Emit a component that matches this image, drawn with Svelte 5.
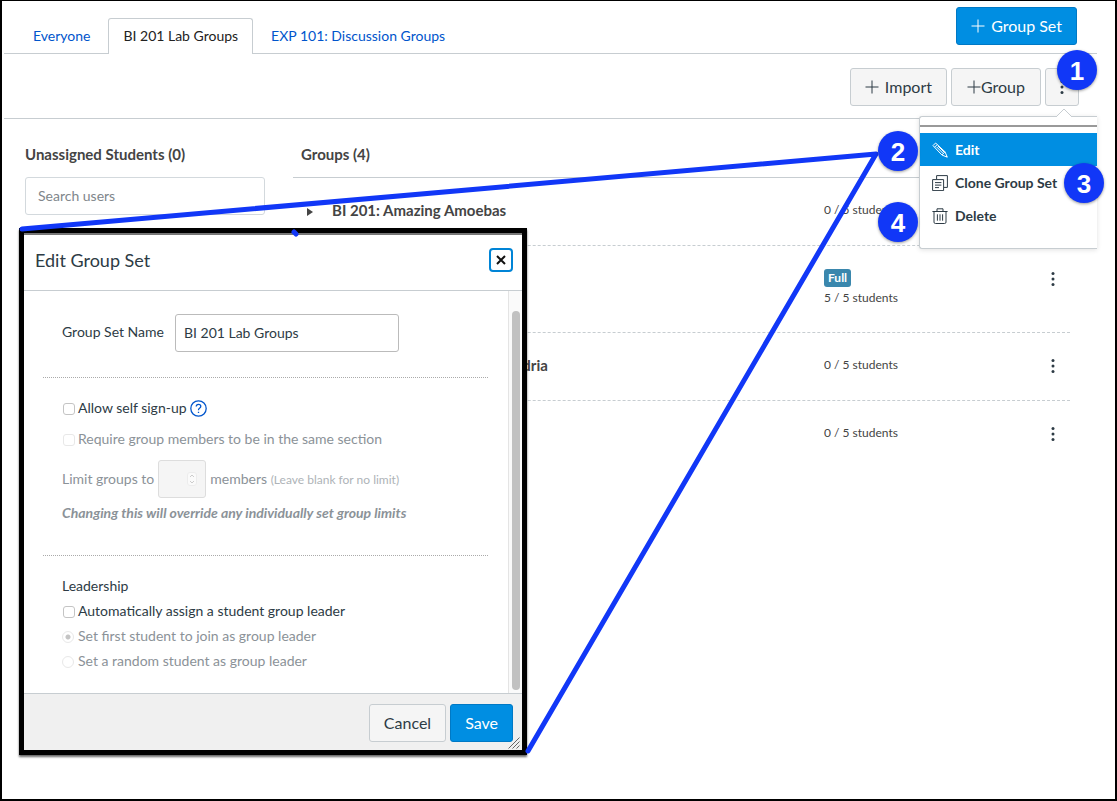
<script lang="ts">
  type Group = { name: string; count: number; max: number };

  const tabs = ['Everyone', 'BI 201 Lab Groups', 'EXP 101: Discussion Groups'];

  const groups: Group[] = [
    { name: 'BI 201: Amazing Amoebas', count: 0, max: 5 },
    { name: '', count: 5, max: 5 },
    { name: 'BI 201: Marvelous Mitochondria', count: 0, max: 5 },
    { name: '', count: 0, max: 5 }
  ];

  let activeTab = $state('BI 201 Lab Groups');
  let search = $state('');
  let setName = $state('BI 201 Lab Groups');
  let selfSignup = $state(false);
  let autoLeader = $state(false);
  let leaderMode = $state('first');

  // the callout lines run from the dialog corners to the Edit menu item
  let pageWidth = $state(1113);
  let tipX = $derived(pageWidth - 239);
</script>

{#snippet plus()}
  <svg class="plus" viewBox="0 0 14 14" aria-hidden="true"><path d="M7 .5v13M.5 7h13" /></svg>
{/snippet}

{#snippet dots()}
  <svg class="dots" viewBox="0 0 4 16" aria-hidden="true">
    <circle cx="2" cy="2.5" r="1.5" /><circle cx="2" cy="8" r="1.5" /><circle cx="2" cy="13.5" r="1.5" />
  </svg>
{/snippet}

<div class="page" bind:clientWidth={pageWidth}>
  <header class="tabs-bar">
    <nav class="tabs">
      {#each tabs as tab}
        <a href="#groups" class="tab" class:active={tab === activeTab} onclick={() => (activeTab = tab)}>{tab}</a>
      {/each}
    </nav>
    <button type="button" class="btn primary">{@render plus()} Group Set</button>
  </header>

  <div class="toolbar">
    <button type="button" class="btn">{@render plus()} Import</button>
    <button type="button" class="btn tight">{@render plus()}Group</button>
    <button type="button" class="btn more" aria-label="Group set options">{@render dots()}</button>
  </div>

  <main class="columns">
    <section class="unassigned">
      <h2>Unassigned Students (0)</h2>
      <input class="search" type="text" placeholder="Search users" aria-label="Search users" bind:value={search} />
    </section>

    <section class="groups">
      <h2>Groups (4)</h2>
      <ul>
        {#each groups as group}
          <li>
            <svg class="arrow" viewBox="0 0 6 8" aria-hidden="true"><path d="M0 0l6 4-6 4z" /></svg>
            <strong>{group.name}</strong>
            <div class="count">
              {#if group.count === group.max}<span class="full">Full</span>{/if}
              <span>{group.count} / {group.max} students</span>
            </div>
            <button type="button" class="row-more" aria-label="Group options">{@render dots()}</button>
          </li>
        {/each}
      </ul>
    </section>
  </main>

  <div class="menu" role="menu">
    <svg class="pointer" viewBox="0 0 18 10" aria-hidden="true"><path d="M1 9L9 1l8 8" /></svg>
    <button type="button" role="menuitem" class="current">
      <svg viewBox="0 0 16 16" aria-hidden="true">
        <path d="M1 3.6L3.6 1 13 9.8l2.3 5.4-5.4-2.2zM2.6 5.2l2.6-2.6M9.9 13L13 9.8M4.6 4.9l6.6 6.6M5.9 3.9l6.3 6.3M14 15l1-1" />
      </svg>
      Edit
    </button>
    <button type="button" role="menuitem">
      <svg viewBox="0 0 16 16" aria-hidden="true">
        <path d="M.6 4.6h11v11H.6zM4.6 4.2V.6h10.8v11.8h-3.4M3 7.6h6.4M3 10.1h6.4M3 12.6h4" />
      </svg>
      Clone Group Set
    </button>
    <button type="button" role="menuitem">
      <svg viewBox="0 0 16 16" aria-hidden="true">
        <path d="M.4 3.5h15.2M5 3.3V.8h6v2.5M2 3.5v10.6q0 1.4 1.4 1.4h9.2q1.4 0 1.4-1.4V3.5M5.4 6.3v6.4M8 6.3v6.4M10.6 6.3v6.4" />
      </svg>
      Delete
    </button>
  </div>

  <div class="dialog" role="dialog" aria-labelledby="dialog-title">
    <div class="dialog-head">
      <h1 id="dialog-title">Edit Group Set</h1>
      <button type="button" class="close" aria-label="Close">
        <svg viewBox="0 0 10 10" aria-hidden="true"><path d="M1 1l8 8M9 1L1 9" /></svg>
      </button>
    </div>

    <div class="dialog-body">
      <form id="group-set-form">
        <div class="fields name-row">
          <label for="set-name">Group Set Name</label>
          <input id="set-name" type="text" bind:value={setName} />
        </div>

        <div class="fields signup">
          <div class="check-row">
            <label><input type="checkbox" bind:checked={selfSignup} />Allow self sign-up</label>
            <button type="button" class="help" aria-label="Help">
              <svg viewBox="0 0 17 17" aria-hidden="true">
                <circle cx="8.5" cy="8.5" r="7.7" />
                <path d="M6.2 6.6q0-2.3 2.3-2.3t2.3 2q0 1.2-1.3 1.9-1 .6-1 1.8v.3M8.5 11.8v1.3" />
              </svg>
            </button>
          </div>
          <label class="muted section-check"><input type="checkbox" disabled />Require group members to be in the same section</label>
          <div class="limit muted">
            <label for="limit">Limit groups to</label>
            <span class="number">
              <input id="limit" type="number" disabled />
              <svg viewBox="0 0 10 14" aria-hidden="true">
                <rect x=".5" y=".5" width="9" height="13" rx="2.5" />
                <path d="M3 5l2-2 2 2M3 9l2 2 2-2" />
              </svg>
            </span>
            <span>members <small>(Leave blank for no limit)</small></span>
          </div>
          <em class="muted">Changing this will override any individually set group limits</em>
        </div>

        <div class="fields leadership" role="group" aria-labelledby="leadership">
          <span id="leadership" class="line">Leadership</span>
          <label class="line"><input type="checkbox" bind:checked={autoLeader} />Automatically assign a student group leader</label>
          <label class="line muted">
            <input type="radio" value="first" disabled={!autoLeader} bind:group={leaderMode} />Set first student to join as group leader
          </label>
          <label class="line muted">
            <input type="radio" value="random" disabled={!autoLeader} bind:group={leaderMode} />Set a random student as group leader
          </label>
        </div>
      </form>
      <div class="track"><div class="thumb"></div></div>
    </div>

    <div class="dialog-foot">
      <button type="button" class="btn">Cancel</button>
      <button type="submit" form="group-set-form" class="btn primary">Save</button>
      <svg class="grip" viewBox="0 0 12 12" aria-hidden="true"><path d="M.5 11.5l11-11M4.5 11.5l7-7M8.5 11.5l3-3" /></svg>
    </div>
  </div>

  <svg class="lines" aria-hidden="true">
    <path d="M20 228L{tipX} 153L526 750M292 231l2 2" />
  </svg>
  <span class="step one">1</span>
  <span class="step two">2</span>
  <span class="step three">3</span>
  <span class="step four">4</span>
</div>

<style>
  :global(body) {
    margin: 0;
    background: #fff;
  }

  .page {
    position: relative;
    box-sizing: border-box;
    min-height: 100vh;
    padding: 0 18px 0 2px;
    border: 2px solid #000;
    border-top-width: 1px;
    overflow: hidden;
    font-family: Lato, 'Liberation Sans', sans-serif;
    font-size: 14px;
    line-height: 20px;
    color: #2d3b45;
  }

  button,
  input {
    font: inherit;
    color: inherit;
  }

  button {
    cursor: pointer;
  }

  svg {
    display: block;
    flex: none;
    fill: none;
    stroke: currentColor;
  }

  h1,
  h2,
  ul {
    margin: 0;
    padding: 0;
    list-style: none;
  }

  .tabs-bar {
    display: flex;
    justify-content: space-between;
    align-items: flex-start;
    height: 52px;
    padding-right: 20px;
    border-bottom: 1px solid #c7cdd1;
  }

  .tabs {
    display: flex;
    padding: 17px 0 0 14px;
  }

  .tab {
    height: 34px;
    padding: 0 14px;
    border: 1px solid transparent;
    border-bottom: 0;
    border-radius: 3px 3px 0 0;
    line-height: 34px;
    color: #0055cc;
    text-decoration: none;
  }

  .tab.active {
    height: 35px;
    margin: 0 3px;
    border-color: #c7cdd1;
    background: #fff;
    color: #222;
  }

  .btn {
    display: inline-flex;
    align-items: center;
    justify-content: center;
    gap: 6px;
    box-sizing: border-box;
    height: 38px;
    padding: 0 14px 1px;
    border: 1px solid #c7cdd1;
    border-radius: 3px;
    background: #f5f5f5;
    font-size: 16px;
    white-space: nowrap;
  }

  .btn.primary {
    border-color: #0079c5;
    background: #008ee2;
    color: #fff;
  }

  .tabs-bar .btn {
    margin-top: 6px;
  }

  .btn.tight {
    gap: 0;
    padding: 0 15px 1px;
  }

  .btn.more {
    width: 34px;
    padding: 0;
  }

  .plus {
    width: 14px;
    height: 14px;
  }

  .dots {
    width: 4px;
    height: 16px;
    fill: #2d3b45;
    stroke: none;
  }

  .toolbar {
    display: flex;
    justify-content: flex-end;
    gap: 4px;
    padding: 14px 18px 12px;
    border-bottom: 1px solid #c7cdd1;
  }

  .columns {
    display: grid;
    grid-template-columns: 240px 1fr;
    gap: 28px;
    padding: 24px 27px 0 21px;
  }

  h2 {
    padding-bottom: 12px;
    font-size: 15px;
    line-height: 22px;
    font-weight: 700;
    color: #444;
  }

  .search {
    box-sizing: border-box;
    width: 100%;
    height: 38px;
    padding: 0 12px 2px;
    border: 1px solid #d3d9dd;
    border-radius: 3px;
  }

  .search::placeholder {
    color: #80868b;
    opacity: 1;
  }

  .groups h2 {
    padding-left: 8px;
  }

  .groups ul {
    border-top: 1px solid #c7cdd1;
  }

  .groups li {
    display: grid;
    grid-template-columns: 25px 1fr 212px 34px;
    align-items: start;
    padding: 21px 0 23px 14px;
    border-bottom: 1px dashed #c7cdd1;
    color: #444;
  }

  .groups li:last-child {
    border-bottom: 0;
  }

  .arrow {
    width: 6px;
    height: 8px;
    margin-top: 9px;
    fill: #444;
    stroke: none;
  }

  .groups strong {
    font-size: 15px;
    line-height: 22px;
  }

  .count {
    display: grid;
    justify-items: start;
    font-size: 12px;
    line-height: 22px;
  }

  .full {
    margin-top: 2px;
    padding: 0 4px;
    border-radius: 3px;
    background: #3a87ad;
    line-height: 18px;
    font-weight: 700;
    color: #fff;
  }

  .row-more {
    display: grid;
    place-items: center;
    height: 23px;
    padding: 0;
    border: 0;
    background: none;
  }

  .menu {
    position: absolute;
    top: 115px;
    right: 18px;
    box-sizing: border-box;
    width: 178px;
    padding: 16px 0;
    border: 1px solid #c7cdd1;
    border-right: 0;
    border-radius: 3px 0 0 3px;
    background: #fff;
    box-shadow: 0 1px 5px rgba(0, 0, 0, 0.12);
  }

  .menu::before {
    content: '';
    position: absolute;
    top: 8px;
    left: 0;
    right: 0;
    border-top: 2px solid #999;
  }

  .pointer {
    position: absolute;
    top: -9px;
    right: 24px;
    width: 18px;
    height: 10px;
    fill: #fff;
    stroke: #c7cdd1;
  }

  .menu button {
    display: flex;
    align-items: center;
    gap: 7px;
    width: 100%;
    height: 33px;
    padding: 0 12px;
    border: 0;
    background: none;
    font-weight: 700;
    white-space: nowrap;
  }

  .menu button svg {
    width: 16px;
    height: 16px;
  }

  .menu .current {
    background: #008ee2;
    color: #fff;
  }

  .dialog {
    position: absolute;
    top: 227px;
    left: 17px;
    width: 498px;
    border: 5px solid #000;
    background: #fff;
    box-shadow: 0 2px 2px rgba(0, 0, 0, 0.6);
  }

  .dialog-head {
    display: flex;
    align-items: center;
    justify-content: space-between;
    height: 49px;
    padding: 0 9px 6px 11px;
    border-top: 2px solid #777;
    border-bottom: 1px solid #c7cdd1;
  }

  h1 {
    font-size: 18px;
    line-height: 24px;
    font-weight: 400;
  }

  .close {
    display: grid;
    place-items: center;
    width: 24px;
    height: 24px;
    padding: 0;
    border: 2px solid #0084d6;
    border-radius: 4px;
    background: #fff;
    color: #111;
  }

  .close svg {
    width: 10px;
    height: 10px;
    stroke-width: 2;
  }

  .dialog-body {
    display: flex;
  }

  form {
    flex: 1;
    padding: 23px 20px 20px 19px;
  }

  .fields {
    padding: 0 19px;
  }

  .fields + .fields {
    border-top: 1px dotted #aaa;
  }

  .name-row {
    display: flex;
    align-items: center;
    gap: 11px;
    padding-bottom: 25px;
  }

  .name-row label {
    padding-bottom: 3px;
  }

  #set-name {
    box-sizing: border-box;
    width: 224px;
    height: 38px;
    padding: 0 8px 2px;
    border: 1px solid #bbb;
    border-radius: 3px;
  }

  .muted {
    color: #8b9298;
  }

  .signup {
    display: grid;
    padding-top: 18px;
    padding-bottom: 30px;
    line-height: 24px;
  }

  .check-row {
    display: flex;
    align-items: center;
    gap: 3px;
    height: 24px;
  }

  label {
    display: flex;
    align-items: center;
  }

  input[type='checkbox'],
  input[type='radio'] {
    appearance: none;
    box-sizing: border-box;
    width: 12px;
    height: 12px;
    margin: 2px 3px 0 1px;
    border: 1px solid #c4c4c4;
    border-radius: 3px;
    background: #fff;
  }

  input[type='radio'] {
    margin: 3px 4px 0 0;
    border-radius: 50%;
  }

  input[type='checkbox']:disabled,
  input[type='radio']:disabled {
    border-color: #e8e8e8;
  }

  input[type='checkbox']:checked {
    background: #008ee2;
  }

  input[type='radio']:checked {
    background: radial-gradient(circle, #c4c4c4 2px, #fff 3px);
  }

  .help {
    padding: 0;
    border: 0;
    background: none;
    color: #0055cc;
  }

  .help svg {
    width: 17px;
    height: 17px;
    stroke-width: 1.3;
  }

  .section-check {
    margin: 7px 0 9px;
  }

  .limit {
    display: flex;
    align-items: center;
    gap: 4px;
    margin-bottom: 3px;
  }

  .number {
    position: relative;
  }

  .number input {
    appearance: textfield;
    display: block;
    box-sizing: border-box;
    width: 48px;
    height: 38px;
    border: 1px solid #ddd;
    border-radius: 3px;
    background: #f5f5f5;
  }

  .number svg {
    position: absolute;
    top: 12px;
    right: 9px;
    width: 10px;
    height: 14px;
    fill: #fafafa;
    stroke: #ccc;
  }

  .number rect {
    stroke: #ececec;
  }

  small {
    font-size: 12px;
    color: #aeb3b7;
  }

  em {
    font-weight: 700;
  }

  .leadership {
    padding-top: 17px;
  }

  .line {
    display: flex;
    height: 25px;
    line-height: 25px;
  }

  .track {
    display: flex;
    box-sizing: border-box;
    width: 14px;
    padding: 20px 2px 3px 3px;
    border-left: 1px solid #e4e4e4;
    background: #fafafa;
  }

  .thumb {
    width: 8px;
    border-radius: 4px;
    background: #c1c1c1;
  }

  .dialog-foot {
    position: relative;
    display: flex;
    justify-content: flex-end;
    gap: 4px;
    padding: 10px 9px 8px;
    border-top: 1px solid #c7cdd1;
    background: #f0f0f0;
  }

  .grip {
    position: absolute;
    right: 2px;
    bottom: 1px;
    width: 12px;
    height: 12px;
    stroke: #666;
  }

  .lines {
    position: absolute;
    top: 0;
    left: 0;
    width: 100%;
    height: 100%;
    pointer-events: none;
    stroke: #1137f7;
    stroke-width: 5;
    stroke-linecap: round;
    stroke-linejoin: round;
  }

  .step {
    position: absolute;
    width: 40px;
    height: 40px;
    border-radius: 50%;
    background: #1137f7;
    box-shadow: 0 1px 3px rgba(0, 0, 0, 0.4);
    font: 700 26px/42px 'Liberation Sans', Arial, sans-serif;
    text-align: center;
    color: #fff;
  }

  .one {
    top: 49px;
    right: 18px;
  }

  .two {
    top: 130px;
    right: 197px;
  }

  .three {
    top: 162px;
    right: 11px;
  }

  .four {
    top: 201px;
    right: 197px;
  }
</style>
